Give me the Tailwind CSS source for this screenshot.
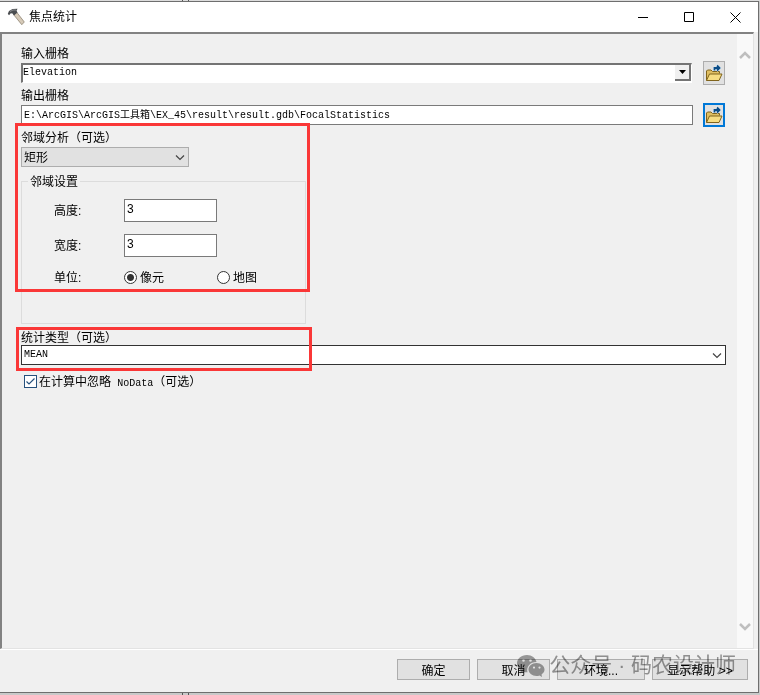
<!DOCTYPE html>
<html lang="zh-CN">
<head>
  <meta charset="UTF-8" />
  <meta name="viewport" content="width=device-width, initial-scale=1.0"/>
  <title>焦点统计</title>
  <script src="https://cdn.jsdelivr.net/npm/@tailwindcss/browser@4"></script>
</head>
<body class="flex min-h-screen flex-col bg-[#c9c9c9] font-['Liberation_Sans','Noto_Sans_CJK_SC',sans-serif] text-xs text-black">
  <!-- strip of the window behind -->
  <div class="flex h-px bg-[#dcdcdc] pl-[182px]"><span class="w-[7px] border-x border-[#555]"></span></div>

  <div class="mr-px flex flex-1 flex-col border-y border-r border-[#6e6e6e] bg-[#f0f0f0]">
    <!-- Title bar -->
    <header class="flex h-[30px] items-center bg-white pl-[7px]">
      <svg class="size-[18px]" viewBox="0 0 18 18">
        <path d="M6.500 6.500 9.500 4 17.300 14 14.800 16.700Z" fill="#d6cab8" stroke="#8f8474" stroke-width=".8"/>
        <path d="M.8 5.800 2 3 5.500 1 10.500.800 9.500 2.800 10.500 4.500 7 7.500 5.500 5.500 3.800 5.200 2 7.300Z" fill="#4a4d50"/>
        <path d="M3 3.500 6 2H9" fill="none" stroke="#9a9da0" stroke-width=".8"/>
      </svg>
      <h1 class="ml-1 flex-1">焦点统计</h1>
      <button type="button" aria-label="最小化" class="flex h-full w-[46px] items-center justify-center">
        <svg class="size-[11px]" viewBox="0 0 11 11"><path d="M0 5.500H10" stroke="#000"/></svg>
      </button>
      <button type="button" aria-label="最大化" class="flex h-full w-[46px] items-center justify-center">
        <svg class="size-[11px]" viewBox="0 0 11 11"><path d="M.5.500H9.500V9.500H.5Z" fill="none" stroke="#000"/></svg>
      </button>
      <button type="button" aria-label="关闭" class="flex h-full w-[46px] items-center justify-center">
        <svg class="size-[11px]" viewBox="0 0 11 11"><path d="M.5.500 10.500 10.500M10.500.500.500 10.500" stroke="#000"/></svg>
      </button>
    </header>

    <!-- Parameters -->
    <main class="mr-1 flex flex-1 border-t-2 border-r border-b border-l-2 border-t-[#828282] border-r-[#e3e3e3] border-b-[#e3e3e3] border-l-[#828282]">
      <form id="params" class="min-w-0 flex-1 pt-3 pr-[11px] pl-[19px]">
        <label for="inRaster" class="block h-[15px] leading-[17px]">输入栅格</label>
        <div class="flex items-center pr-px">
          <div class="relative flex-1">
            <select id="inRaster" class="block h-5 w-full appearance-none border-t-2 border-r border-b border-l-2 border-t-[#747474] border-r-white border-b-white border-l-[#747474] bg-white pb-0.5 font-['Liberation_Mono','Noto_Sans_CJK_SC',monospace] text-[10px]">
              <option>Elevation</option>
            </select>
            <span class="pointer-events-none absolute top-0.5 right-px bottom-0.5 flex w-4 items-center justify-center border-r-2 border-b-2 border-[#747474] bg-[#f0f0f0]">
              <svg class="h-1 w-[7px]" viewBox="0 0 7 4"><path d="M0 0H7L3.500 4Z"/></svg>
            </span>
          </div>
          <button type="button" aria-label="浏览输入栅格" class="ml-[11px] flex h-6 w-[22px] items-center justify-center border border-[#adadad] bg-[#e1e1e1]">
            <svg class="size-[18px] shrink-0" viewBox="0 0 18 18">
              <path d="M1.500 16.500V7L2.500 6H6L7.500 7.500H14.500V9.500" fill="#e0bf62" stroke="#80641c"/>
              <path d="M1.500 16.500 4.500 10H17L14 16.500Z" fill="#f7dd82" stroke="#80641c"/>
              <path d="M8 7V3H11V0L16.500 4 12 8V6H10V7" fill="#d8ecfa"/>
              <path d="M9.500 6.500V4H14.500M12 1.500 14.500 4 12 6.500" fill="none" stroke="#0b4c86" stroke-width="1.800"/>
            </svg>
          </button>
        </div>

        <label for="outRaster" class="mt-[3px] block h-[15px] leading-[17px]">输出栅格</label>
        <div class="flex items-center pr-px">
          <input id="outRaster" type="text" value="E:\ArcGIS\ArcGIS工具箱\EX_45\result\result.gdb\FocalStatistics" class="h-5 min-w-0 flex-1 border border-[#7a7a7a] bg-white px-0.5 pb-1 font-['Liberation_Mono','Noto_Sans_CJK_SC',monospace] text-[10px]" />
          <button type="button" aria-label="浏览输出栅格" class="ml-[10px] flex h-6 w-[22px] items-center justify-center border-2 border-[#0078d7] bg-[#e1e1e1]">
            <svg class="size-[18px] shrink-0" viewBox="0 0 18 18">
              <path d="M1.500 16.500V7L2.500 6H6L7.500 7.500H14.500V9.500" fill="#e0bf62" stroke="#80641c"/>
              <path d="M1.500 16.500 4.500 10H17L14 16.500Z" fill="#f7dd82" stroke="#80641c"/>
              <path d="M8 7V3H11V0L16.500 4 12 8V6H10V7" fill="#d8ecfa"/>
              <path d="M9.500 6.500V4H14.500M12 1.500 14.500 4 12 6.500" fill="none" stroke="#0b4c86" stroke-width="1.800"/>
            </svg>
          </button>
        </div>

        <section class="relative mt-[3px] w-[285px]">
          <label for="neighborhood" class="block h-[15px] leading-[17px]">邻域分析（可选）</label>
          <div class="relative mt-0.5 w-[168px]">
            <select id="neighborhood" class="block h-5 w-full appearance-none border border-[#adadad] bg-[#e1e1e1] px-0.5 pt-px text-xs leading-[18px]">
              <option>矩形</option>
            </select>
            <svg class="pointer-events-none absolute top-2 right-1 h-[6px] w-[10px]" viewBox="0 0 10 6"><path d="M1 .5 5 4.500 9 .5" fill="none" stroke="#444" stroke-width="1.200"/></svg>
          </div>

          <fieldset class="mt-[6px] border border-[#dcdcdc] pb-[38px] pl-8">
            <legend class="-ml-[26px] h-4 px-0.5 leading-[18px]">邻域设置</legend>
            <div class="grid grid-cols-[70px_93px_1fr] items-center gap-y-3 pt-[10px]">
              <label for="height">高度:</label>
              <input id="height" type="text" value="3" class="h-[23px] w-full border border-[#7a7a7a] bg-white px-0.5 pb-1 text-xs" />
              <span></span>
              <label for="width">宽度:</label>
              <input id="width" type="text" value="3" class="h-[23px] w-full border border-[#7a7a7a] bg-white px-0.5 pb-1 text-xs" />
              <span></span>
              <span class="h-4 leading-[18px]">单位:</span>
              <label class="flex h-4 items-center gap-[3px]">
                <input type="radio" name="unit" checked class="size-[13px] appearance-none rounded-full border border-[#333] bg-white bg-[radial-gradient(circle,#333_3px,white_4px)]" />
                <span class="h-4 leading-[18px]">像元</span>
              </label>
              <label class="flex h-4 items-center gap-[3px]">
                <input type="radio" name="unit" class="size-[13px] appearance-none rounded-full border border-[#333] bg-white" />
                <span class="h-4 leading-[18px]">地图</span>
              </label>
            </div>
          </fieldset>
          <div class="pointer-events-none absolute -top-[7px] -left-[6px] h-[169px] w-[295px] border-3 border-[#fa3737]"></div>
        </section>

        <section class="relative mt-[6px]">
          <label for="statType" class="block h-[15px] leading-[17px]">统计类型（可选）</label>
          <div class="relative">
            <select id="statType" class="block h-5 w-full appearance-none border border-[#333] bg-white px-0.5 font-['Liberation_Mono','Noto_Sans_CJK_SC',monospace] text-[10px]">
              <option>MEAN</option>
            </select>
            <svg class="pointer-events-none absolute top-2 right-1 h-[6px] w-[10px]" viewBox="0 0 10 6"><path d="M1 .5 5 4.500 9 .5" fill="none" stroke="#444" stroke-width="1.200"/></svg>
          </div>
          <div class="pointer-events-none absolute -top-[3px] -left-[5px] h-11 w-[296px] border-3 border-[#fa3737]"></div>
        </section>

        <label class="mt-2 ml-[3px] flex h-4 w-fit items-center">
          <span class="relative mr-0.5 size-[13px]">
            <input type="checkbox" checked class="block size-[13px] appearance-none border border-[#26517d] bg-white" />
            <svg class="pointer-events-none absolute inset-0 size-[13px]" viewBox="0 0 13 13"><path d="M2.500 6.500 5 9 10.500 3.500" fill="none" stroke="#26517d" stroke-width="1.200"/></svg>
          </span>
          <span class="h-4 leading-[18px]">在计算中忽略 <span class="ml-[3px] font-['Liberation_Mono',monospace] text-[10px]">NoData</span>（可选）</span>
        </label>
      </form>

      <!-- Disabled scroll bar -->
      <div class="flex w-4 flex-col items-center justify-between bg-[#f9f9f9] py-4">
        <svg class="h-[10px] w-3" viewBox="0 0 12 10"><path d="M1 8 6 3 11 8" fill="none" stroke="#bfbfbf" stroke-width="2.500"/></svg>
        <svg class="h-[10px] w-3" viewBox="0 0 12 10"><path d="M1 2 6 7 11 2" fill="none" stroke="#bfbfbf" stroke-width="2.500"/></svg>
      </div>
    </main>

    <!-- Buttons -->
    <footer class="relative flex h-[43px] justify-end gap-[7px] border-t border-white pt-[9px] pr-[10px]">
      <button type="button" class="h-[21px] w-[73px] border border-[#adadad] bg-[#e1e1e1] pt-0.5 leading-[19px]">确定</button>
      <button type="button" class="h-[21px] w-[73px] border border-[#adadad] bg-[#e1e1e1] pt-0.5 leading-[19px]">取消</button>
      <button type="button" class="h-[21px] w-[88px] border border-[#adadad] bg-[#e1e1e1] pt-0.5 leading-[19px]">环境...</button>
      <button type="button" class="h-[21px] w-24 border border-[#adadad] bg-[#e1e1e1] pt-0.5 leading-[19px]">显示帮助 &gt;&gt;</button>

      <!-- Account watermark -->
      <div class="pointer-events-none absolute top-0 right-[22px] flex h-[30px] items-center gap-1 text-[21px] whitespace-nowrap text-[#999] mix-blend-multiply">
        <svg class="mt-0.5 h-[23px] w-7" viewBox="0 0 28 23" fill="#a0a0a0">
          <path fill-rule="evenodd" d="M10 0C4 0 0 4 0 8.500 0 11.500 1.500 13.700 4 15.500L3 18.500 6.500 16.700Q8.500 17.300 10.500 17.200C9 12 13 7 19.500 7 18.500 3 15 0 10 0ZM6.500 4.200A1.300 1.300 0 1 1 6.500 6.800 1.300 1.300 0 1 1 6.500 4.200M13.500 4.200A1.300 1.300 0 1 1 13.500 6.800 1.300 1.300 0 1 1 13.500 4.200"/>
          <path fill-rule="evenodd" d="M19.500 8C14.800 8 11.500 11 11.500 14.500S15 21 19.500 21Q21 21 22.500 20.500L25 22 24.500 19.500C26.500 18 27.500 16.500 27.500 14.500 27.500 11 24 8 19.500 8ZM17 11.500A1.100 1.100 0 1 1 17 13.700 1.100 1.100 0 1 1 17 11.500M22.500 11.500A1.100 1.100 0 1 1 22.500 13.700 1.100 1.100 0 1 1 22.500 11.500"/>
        </svg>
        <span>公众号 · 码农设计师</span>
      </div>
    </footer>
  </div>

  <div class="flex h-[2px] bg-[#c9c9c9] pl-[182px]"><span class="w-[7px] border-x border-[#555]"></span></div>
</body>
</html>
